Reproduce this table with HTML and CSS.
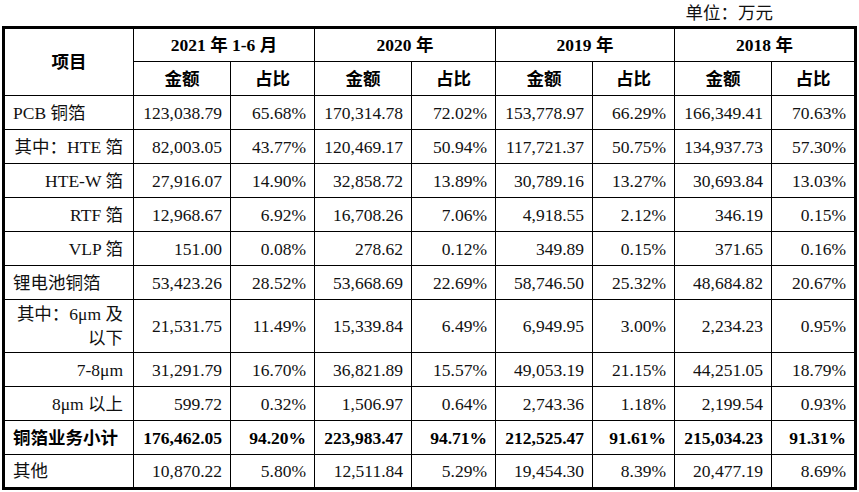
FILE: index.html
```html
<!DOCTYPE html>
<html lang="zh-CN">
<head>
<meta charset="utf-8">
<title>铜箔业务收入</title>
<link rel="stylesheet" href="styles.css">
</head>
<body>
<div class="unit">单位：万元</div>
<table class="t">
  <colgroup>
    <col class="w-item">
    <col class="w-amt">
    <col class="w-pct">
    <col class="w-amt">
    <col class="w-pct">
    <col class="w-amt">
    <col class="w-pct2">
    <col class="w-amt">
    <col class="w-pct">
  </colgroup>
  <thead>
    <tr class="r">
      <th rowspan="2">项目</th>
      <th colspan="2">2021 年 1-6 月</th>
      <th colspan="2">2020 年</th>
      <th colspan="2">2019 年</th>
      <th colspan="2">2018 年</th>
    </tr>
    <tr class="r">
      <th>金额</th><th>占比</th>
      <th>金额</th><th>占比</th>
      <th>金额</th><th>占比</th>
      <th>金额</th><th>占比</th>
    </tr>
  </thead>
  <tbody>
    <tr class="r">
      <td class="item">PCB 铜箔</td>
      <td class="num">123,038.79</td><td class="num">65.68%</td>
      <td class="num">170,314.78</td><td class="num">72.02%</td>
      <td class="num">153,778.97</td><td class="num">66.29%</td>
      <td class="num">166,349.41</td><td class="num">70.63%</td>
    </tr>
    <tr class="r">
      <td class="sub nw">其中：HTE 箔</td>
      <td class="num">82,003.05</td><td class="num">43.77%</td>
      <td class="num">120,469.17</td><td class="num">50.94%</td>
      <td class="num">117,721.37</td><td class="num">50.75%</td>
      <td class="num">134,937.73</td><td class="num">57.30%</td>
    </tr>
    <tr class="r">
      <td class="sub nw">HTE-W 箔</td>
      <td class="num">27,916.07</td><td class="num">14.90%</td>
      <td class="num">32,858.72</td><td class="num">13.89%</td>
      <td class="num">30,789.16</td><td class="num">13.27%</td>
      <td class="num">30,693.84</td><td class="num">13.03%</td>
    </tr>
    <tr class="r">
      <td class="sub nw">RTF 箔</td>
      <td class="num">12,968.67</td><td class="num">6.92%</td>
      <td class="num">16,708.26</td><td class="num">7.06%</td>
      <td class="num">4,918.55</td><td class="num">2.12%</td>
      <td class="num">346.19</td><td class="num">0.15%</td>
    </tr>
    <tr class="r">
      <td class="sub nw">VLP 箔</td>
      <td class="num">151.00</td><td class="num">0.08%</td>
      <td class="num">278.62</td><td class="num">0.12%</td>
      <td class="num">349.89</td><td class="num">0.15%</td>
      <td class="num">371.65</td><td class="num">0.16%</td>
    </tr>
    <tr class="r">
      <td class="item">锂电池铜箔</td>
      <td class="num">53,423.26</td><td class="num">28.52%</td>
      <td class="num">53,668.69</td><td class="num">22.69%</td>
      <td class="num">58,746.50</td><td class="num">25.32%</td>
      <td class="num">48,684.82</td><td class="num">20.67%</td>
    </tr>
    <tr class="r tall">
      <td class="sub">其中：6μm 及以下</td>
      <td class="num">21,531.75</td><td class="num">11.49%</td>
      <td class="num">15,339.84</td><td class="num">6.49%</td>
      <td class="num">6,949.95</td><td class="num">3.00%</td>
      <td class="num">2,234.23</td><td class="num">0.95%</td>
    </tr>
    <tr class="r">
      <td class="sub nw">7-8μm</td>
      <td class="num">31,291.79</td><td class="num">16.70%</td>
      <td class="num">36,821.89</td><td class="num">15.57%</td>
      <td class="num">49,053.19</td><td class="num">21.15%</td>
      <td class="num">44,251.05</td><td class="num">18.79%</td>
    </tr>
    <tr class="r">
      <td class="sub nw">8μm 以上</td>
      <td class="num">599.72</td><td class="num">0.32%</td>
      <td class="num">1,506.97</td><td class="num">0.64%</td>
      <td class="num">2,743.36</td><td class="num">1.18%</td>
      <td class="num">2,199.54</td><td class="num">0.93%</td>
    </tr>
    <tr class="r total">
      <td class="item">铜箔业务小计</td>
      <td class="num">176,462.05</td><td class="num">94.20%</td>
      <td class="num">223,983.47</td><td class="num">94.71%</td>
      <td class="num">212,525.47</td><td class="num">91.61%</td>
      <td class="num">215,034.23</td><td class="num">91.31%</td>
    </tr>
    <tr class="r">
      <td class="item">其他</td>
      <td class="num">10,870.22</td><td class="num">5.80%</td>
      <td class="num">12,511.84</td><td class="num">5.29%</td>
      <td class="num">19,454.30</td><td class="num">8.39%</td>
      <td class="num">20,477.19</td><td class="num">8.69%</td>
    </tr>
  </tbody>
</table>
</body>
</html>
```

FILE: styles.css
```css
body {
  margin: 0;
  background: #fff;
  color: #000;
  font-family: "Liberation Serif", "Noto Sans CJK SC", serif;
  font-size: 17.5px;
}

.unit {
  height: 26px;
  line-height: 26px;
  text-align: right;
  padding-right: 86px;
  color: #111;
}

.t {
  border-collapse: collapse;
  table-layout: fixed;
  width: 855px;
  margin-left: 2px;
  border: 3px solid #000;
}

.w-item { width: 130px; }
.w-amt { width: 97px; }
.w-pct { width: 84px; }
.w-pct2 { width: 82px; }

.t th,
.t td {
  border: 1px solid #000;
  padding: 0 8px;
  line-height: 24px;
  vertical-align: middle;
}

.r { height: 34px; }
.tall { height: 53px; }

.t th {
  font-weight: bold;
  text-align: center;
  color: #000;
}

.t td {
  color: #111;
}

.num {
  text-align: right;
  white-space: nowrap;
}

.item {
  text-align: left;
  padding-left: 7px;
  white-space: nowrap;
}

.t td.sub {
  text-align: right;
  padding-right: 10px;
  padding-left: 4px;
}

.nw {
  white-space: nowrap;
}

.total td {
  font-weight: bold;
  color: #000;
}
```
